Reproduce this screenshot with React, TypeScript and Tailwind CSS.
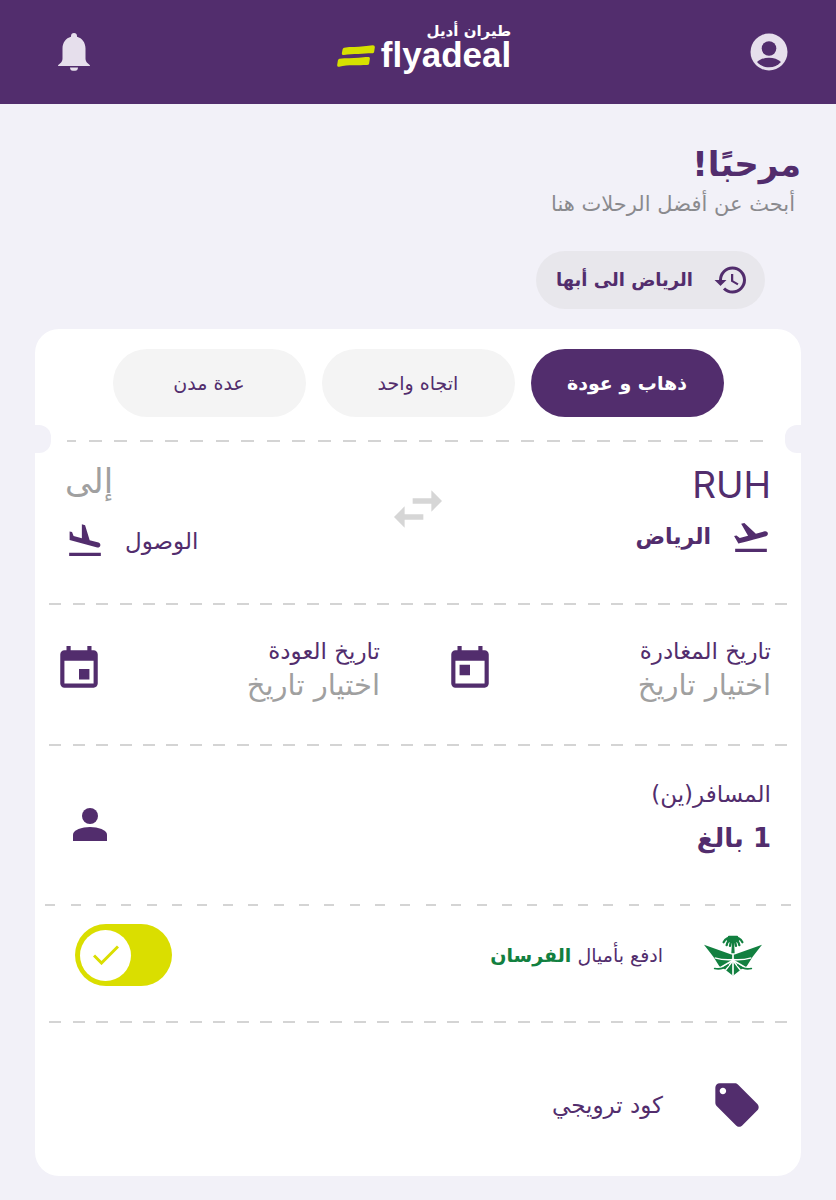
import { useState } from 'react'
import clsx from 'clsx'
import {
  MdEvent,
  MdFlightLand,
  MdFlightTakeoff,
  MdHistory,
  MdLocalOffer,
  MdSwapHoriz,
  MdToday,
} from 'react-icons/md'

const TRIP_TYPES = [
  { id: 'return', label: 'ذهاب و عودة' },
  { id: 'oneway', label: 'اتجاه واحد' },
  { id: 'multi', label: 'عدة مدن' },
]

function BellIcon() {
  return (
    <svg viewBox="0 0 32 38" className="h-[38px] w-8" fill="currentColor" aria-hidden="true">
      <path d="M16 0c1.800 0 3 1.300 3 3v.8c5.200 1.400 8.500 6 8.500 11.700v10c0 2.300.8 3.500 2.500 5 1.200 1 2 1.300 2 2.500H0c0-1.200.8-1.500 2-2.500 1.700-1.500 2.500-2.700 2.500-5v-10C4.500 9.800 7.800 5.200 13 3.800V3c0-1.700 1.200-3 3-3z" />
      <path d="M12 34.500h8c0 2-1.200 3.300-2.800 3.300h-2.400c-1.600 0-2.800-1.300-2.800-3.300z" />
    </svg>
  )
}

function AccountIcon() {
  return (
    <svg viewBox="0 0 38 38" className="size-[38px]" aria-hidden="true">
      <circle cx="19" cy="19" r="18.500" fill="currentColor" />
      <circle cx="19" cy="15.500" r="7.300" fill="#522d6d" />
      <path d="M7 29C10 26.200 14.300 24.700 19 24.700S28 26.200 31 29c-3 3.400-7.200 5.300-12 5.300S10 32.400 7 29z" fill="#522d6d" />
    </svg>
  )
}

function PersonIcon() {
  return (
    <svg viewBox="0 0 34 33" className="mt-3 h-[33px] w-[34px]" fill="currentColor" aria-hidden="true">
      <circle cx="17" cy="8" r="8" />
      <path d="M0 33v-6.500C0 22 9 19 17 19s17 3 17 7.500V33z" />
    </svg>
  )
}

function PalmIcon() {
  return (
    <svg viewBox="0 0 174 122" className="h-[41px] w-[58px]" fill="none" aria-hidden="true">
      {/* wings and lower diamond */}
      <path d="M0 29l82 29h10l82-29-28 36-18 28-14 8-27 21-27-21-14-8-18-28z" fill="#128040" />
      <g stroke="#fff">
        <path d="M87 54v68" strokeWidth="5" />
        <path d="M32 68c18 5 36 7 55 5 19 2 37 0 55-5" strokeWidth="4" />
        <path d="M87 75L50 97M87 75l37 22" strokeWidth="5" />
        <path d="M87 76L64 106M87 76l23 30" strokeWidth="4" />
      </g>
      <g stroke="#128040" strokeWidth="5" strokeLinecap="round">
        <path d="M32 100c14 3 28 0 40-10" />
        <path d="M142 100c-14 3-28 0-40-10" />
      </g>
      {/* palm crown */}
      <path d="M84 16h6l2 38H82z" fill="#128040" />
      <ellipse cx="87" cy="13" rx="20" ry="10" fill="#128040" />
      <g stroke="#128040" strokeWidth="7" strokeLinecap="round">
        <path d="M87 11c-13-6-23-2-28 10" />
        <path d="M87 11c13-6 23-2 28 10" />
        <path d="M87 13c-11 0-18 8-19 17" />
        <path d="M87 13c11 0 18 8 19 17" />
        <path d="M86 14c-5 5-8 10-8 18" />
        <path d="M88 14c5 5 8 10 8 18" />
        <path d="M75 5h24" />
      </g>
    </svg>
  )
}

function Logo() {
  return (
    <div className="flex items-end gap-1.5" dir="ltr">
      <svg viewBox="0 0 113 66" className="mb-1 h-[22px] w-[38px]" fill="#d6e000" aria-hidden="true">
        <path d="M21 8C42 5 60 7 80 4c10-1 18-2 27-3 4 0 6 2 6 6l-2 13c-1 4-3 5-6 5-16 0-26 2-42 2-15 0-28 1-43 3-4 1-6-1-6-5l2-11c1-4 2-5 5-6z" />
        <path d="M7 41c20-3 38-1 58-3 10-1 18-2 27-2 5 0 7 2 6 6l-2 13c0 4-2 5-6 5-16 0-26 1-42 1-15 0-27 1-42 4-4 1-6-1-6-5l2-13c1-4 2-5 5-6z" />
      </svg>
      <div className="flex flex-col items-end text-white">
        <span className="font-['DejaVu_Sans',sans-serif] text-[15px] leading-4 font-bold" dir="rtl">طيران أديل</span>
        <span className="font-['Liberation_Sans',sans-serif] text-[35px] leading-8 font-bold">flyadeal</span>
      </div>
    </div>
  )
}

// Row of evenly spread dashes between two parts of the ticket
function Dashes({ count, className, dash }: { count: number; className?: string; dash: string }) {
  return (
    <div className={clsx('flex h-[2px] justify-between overflow-hidden', className)} aria-hidden="true">
      {Array.from({ length: count }, (_, i) => (
        <span key={i} className={clsx('h-full shrink-0 bg-[#d4d4d4]', dash)} />
      ))}
    </div>
  )
}

function DateField({ label, icon }: { label: string; icon: React.ReactNode }) {
  return (
    <button type="button" className="flex items-center justify-between text-start">
      <span className="flex flex-col">
        <span className="text-[23px] leading-8">{label}</span>
        <span className="text-[29px] leading-9 text-[#a0a0a0]">اختيار تاريخ</span>
      </span>
      {icon}
    </button>
  )
}

export default function App() {
  const [tripType, setTripType] = useState('return')
  const [payWithMiles, setPayWithMiles] = useState(true)

  return (
    <div dir="rtl" lang="ar" className="min-h-screen bg-[#f2f1f8] pb-6 font-['DejaVu_Sans',sans-serif] text-[#522d6d]">
      <header className="flex items-center justify-between bg-[#522d6d] py-5 pr-12 pl-[58px] text-[#e6dfec]">
        <button type="button" aria-label="الحساب">
          <AccountIcon />
        </button>
        <a href="#" aria-label="flyadeal" className="flex h-16 items-center pb-2.5 pl-2">
          <Logo />
        </a>
        <button type="button" aria-label="الإشعارات">
          <BellIcon />
        </button>
      </header>

      <main className="px-[35px]">
        <div className="pt-9">
          <h1 className="text-[34px] leading-[48px] font-bold">مرحبًا!</h1>
          <p className="pr-1.5 text-[21px] leading-8 text-[#8a8a8e]">أبحث عن أفضل الرحلات هنا</p>
        </div>

        <button type="button" className="mt-[31px] mr-9 flex h-[58px] items-center gap-5 rounded-full bg-[#e8e7ec] pr-4 pl-5">
          <MdHistory className="size-9" />
          <span className="text-[18px] leading-8 font-bold">الرياض الى أبها</span>
        </button>

        <section className="mt-5 rounded-3xl bg-white pt-5">
          <div className="flex justify-center gap-4">
            {TRIP_TYPES.map((type) => (
              <button
                key={type.id}
                type="button"
                aria-pressed={tripType === type.id}
                onClick={() => setTripType(type.id)}
                className={clsx(
                  'h-[68px] w-[193px] rounded-full text-[19px]',
                  tripType === type.id ? 'bg-[#522d6d] font-bold text-white' : 'bg-[#f4f4f4]'
                )}
              >
                {type.label}
              </button>
            ))}
          </div>

          {/* Ticket notches */}
          <div className="mt-2 flex items-center">
            <span className="h-7 w-4 rounded-e-xl bg-[#f2f1f8]" />
            <Dashes count={28} dash="w-[13px] last:w-[9px]" className="mx-[22px] mt-1 ml-4 grow" />
            <span className="h-7 w-4 rounded-s-xl bg-[#f2f1f8]" />
          </div>

          {/* Route */}
          <div className="flex items-start px-[30px] pt-2 pb-[42px]">
            <button type="button" className="flex flex-1 flex-col gap-2 text-start">
              <span className="font-['Inter',sans-serif] text-[37px] leading-[48px]">RUH</span>
              <span className="flex h-10 items-center gap-5">
                <MdFlightTakeoff className="size-10" />
                <span className="text-[22px] leading-8 font-bold">الرياض</span>
              </span>
            </button>
            <button type="button" aria-label="تبديل" className="mt-4 text-[#d6d6d6]">
              <MdSwapHoriz className="size-16" />
            </button>
            <button type="button" className="flex flex-1 flex-col items-end gap-5">
              <span className="text-[34px] leading-10 text-[#a0a0a0]">إلى</span>
              <span className="flex h-10 items-center gap-5">
                <span className="text-[23px] leading-8">الوصول</span>
                <MdFlightLand className="size-10" />
              </span>
            </button>
          </div>

          <Dashes count={32} dash="w-3" className="mx-3.5" />

          {/* Dates */}
          <div className="grid grid-cols-2 gap-[65px] pt-[30px] pr-[30px] pb-[41px] pl-[19px]">
            <DateField label="تاريخ المغادرة" icon={<MdToday className="size-[50px]" />} />
            <DateField label="تاريخ العودة" icon={<MdEvent className="size-[50px]" />} />
          </div>

          <Dashes count={32} dash="w-3" className="mx-3.5" />

          {/* Passengers */}
          <button type="button" className="flex w-full items-center justify-between pt-8 pr-[30px] pb-[46px] pl-[38px] text-start">
            <span className="flex flex-col gap-2">
              <span className="text-[23px] leading-8">المسافر(ين)</span>
              <span className="text-[26px] leading-10 font-bold">1 بالغ</span>
            </span>
            <PersonIcon />
          </button>

          <Dashes count={30} dash="w-2.5" className="mx-2.5" />

          {/* Pay with miles */}
          <div className="flex items-center pt-[18px] pr-[38px] pb-[35px] pl-10">
            <span className="flex w-[60px] justify-center">
              <PalmIcon />
            </span>
            <label htmlFor="miles" className="mr-10 grow text-[19px] leading-8">
              ادفع بأميال <b className="text-[#128040]">الفرسان</b>
            </label>
            <label
              className={clsx(
                'flex h-[62px] w-[97px] cursor-pointer items-center rounded-full px-[5px]',
                payWithMiles ? 'justify-end bg-[#dade00]' : 'justify-start bg-[#d4d4d4]'
              )}
            >
              <input
                id="miles"
                type="checkbox"
                role="switch"
                className="sr-only"
                checked={payWithMiles}
                onChange={(e) => setPayWithMiles(e.target.checked)}
              />
              <span className="flex size-[51px] items-center justify-center rounded-full bg-white">
                <svg viewBox="0 0 26 20" className="h-5 w-[26px]" fill="none" stroke="#dade00" strokeWidth="3" aria-hidden="true">
                  <path d="M1 10.500L8.500 18 25 1.500" />
                </svg>
              </span>
            </label>
          </div>

          <Dashes count={32} dash="w-3" className="mx-3.5" />

          {/* Promo code */}
          <button type="button" className="flex w-full items-center gap-12 pt-14 pr-[38px] pb-[45px] pl-10 text-start">
            <MdLocalOffer className="size-[52px]" />
            <span className="text-[23px] leading-8">كود ترويجي</span>
          </button>
        </section>
      </main>
    </div>
  )
}
